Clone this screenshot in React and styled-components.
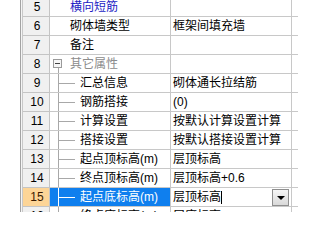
import React from 'react';
import styled, { createGlobalStyle, css } from 'styled-components';

const Global = createGlobalStyle`
  html, body { margin: 0; padding: 0; background: #ffffff; }
  body { width: 298px; height: 212px; overflow: hidden; }
`;

const Frame = styled.div`
  width: 298px;
  height: 212px;
  overflow: hidden;
  background: #ffffff;
  font-family: "Liberation Sans", "Noto Sans CJK SC", sans-serif;
  font-size: 12px;
  color: #000;
`;

const Table = styled.div`
  margin-top: -2px;
  display: flex;
  flex-direction: column;
`;

const Row = styled.div`
  display: grid;
  grid-template-columns: 21px 2px 27px 121px 121px 1fr;
  height: 19px;
`;

const Strip = styled.div`
  background: #ffffff;
  border-right: 1px solid #a3a3a3;
`;

const Gap = styled.div`
  background: #f4f4f4;
  border-right: 1px solid #c8c8c8;
`;

const Header = styled.div`
  display: flex;
  align-items: center;
  justify-content: center;
  padding-left: 2px;
  background: ${p => (p.$active ? '#fdd597' : '#f0f0f0')};
  border-right: 1px solid #c4c4c4;
  border-bottom: 1px solid #c4c4c4;
  font-size: 12px;
  color: ${p => (p.$active ? '#3a1a00' : '#000')};
  line-height: 18px;
`;

const NameCell = styled.div`
  display: flex;
  align-items: center;
  overflow: hidden;
  white-space: nowrap;
  background: ${p => (p.$selected ? '#0f7fee' : '#ffffff')};
  border-right: 1px solid #c8c8c8;
  border-bottom: 1px solid #c8c8c8;
  padding-left: ${p => (p.$indent ? '0' : '20px')};
  line-height: 18px;
  color: ${p =>
    p.$selected ? '#ffffff' : p.$tone === 'blue' ? '#1c1cc4' : p.$tone === 'gray' ? '#8c8c8c' : '#000'};
`;

const Tree = styled.svg`
  flex: none;
  width: 30px;
  height: 18px;
  display: block;
`;

const GroupBox = styled.svg`
  flex: none;
  width: 20px;
  height: 18px;
  display: block;
`;

const ValueCell = styled.div`
  display: flex;
  align-items: center;
  overflow: hidden;
  white-space: nowrap;
  padding-left: 2px;
  padding-right: 1px;
  background: #ffffff;
  border-right: 1px solid #c8c8c8;
  border-bottom: 1px solid #c8c8c8;
  line-height: 18px;
  ${p =>
    p.$editing &&
    css`
      justify-content: space-between;
    `}
`;

const Rest = styled.div`
  background: #ffffff;
  border-bottom: 1px solid #c8c8c8;
`;

const EditText = styled.span`
  display: flex;
  align-items: center;
`;

const Caret = styled.span`
  display: inline-block;
  width: 1px;
  height: 13px;
  background: #000;
  margin-left: 0px;
`;

const DropButton = styled.div`
  width: 15px;
  height: 15px;
  margin-right: 1px;
  border: 1px solid #8f8f8f;
  background: linear-gradient(#f6f6f6, #d9d9d9);
  display: flex;
  align-items: center;
  justify-content: center;
`;

const Arrow = styled.span`
  width: 0;
  height: 0;
  border-left: 4px solid transparent;
  border-right: 4px solid transparent;
  border-top: 4px solid #000;
  margin-top: 1px;
`;

const rows = [
  { n: 5, name: '横向短筋', value: '', tone: 'blue' },
  { n: 6, name: '砌体墙类型', value: '框架间填充墙' },
  { n: 7, name: '备注', value: '' },
  { n: 8, name: '其它属性', value: '', group: true, tone: 'gray' },
  { n: 9, name: '汇总信息', value: '砌体通长拉结筋', child: true },
  { n: 10, name: '钢筋搭接', value: '(0)', child: true },
  { n: 11, name: '计算设置', value: '按默认计算设置计算', child: true },
  { n: 12, name: '搭接设置', value: '按默认搭接设置计算', child: true },
  { n: 13, name: '起点顶标高(m)', value: '层顶标高', child: true },
  { n: 14, name: '终点顶标高(m)', value: '层顶标高+0.6', child: true },
  { n: 15, name: '起点底标高(m)', value: '层顶标高', child: true, selected: true },
  { n: 16, name: '终点底标高(m)', value: '层底标高', child: true },
];

function TreeLines({ color }) {
  return (
    <Tree viewBox="0 0 30 18">
      <line x1="8.5" y1="0" x2="8.5" y2="19" stroke={color} strokeWidth="1" />
      <line x1="8" y1="9.5" x2="25" y2="9.5" stroke={color} strokeWidth="1" />
    </Tree>
  );
}

function Collapse() {
  return (
    <GroupBox viewBox="0 0 20 18">
      <rect x="3.5" y="4.5" width="8" height="8" fill="#f6f6f6" stroke="#9a9a9a" />
      <line x1="5" y1="8.5" x2="10" y2="8.5" stroke="#444" />
      <line x1="8.5" y1="13" x2="8.5" y2="19" stroke="#a8a8a8" />
    </GroupBox>
  );
}

export default function App() {
  return (
    <Frame>
      <Global />
      <Table>
        {rows.map(r => (
          <Row key={r.n}>
            <Strip />
            <Gap />
            <Header $active={r.selected}>{r.n}</Header>
            <NameCell $selected={r.selected} $tone={r.tone} $indent={r.child || r.group}>
              {r.child && <TreeLines color={r.selected ? '#ffffff' : '#a8a8a8'} />}
              {r.group && <Collapse />}
              {r.name}
            </NameCell>
            {r.selected ? (
              <ValueCell $editing>
                <EditText>
                  {r.value}
                  <Caret />
                </EditText>
                <DropButton>
                  <Arrow />
                </DropButton>
              </ValueCell>
            ) : (
              <ValueCell>{r.value}</ValueCell>
            )}
            <Rest />
          </Row>
        ))}
      </Table>
    </Frame>
  );
}
